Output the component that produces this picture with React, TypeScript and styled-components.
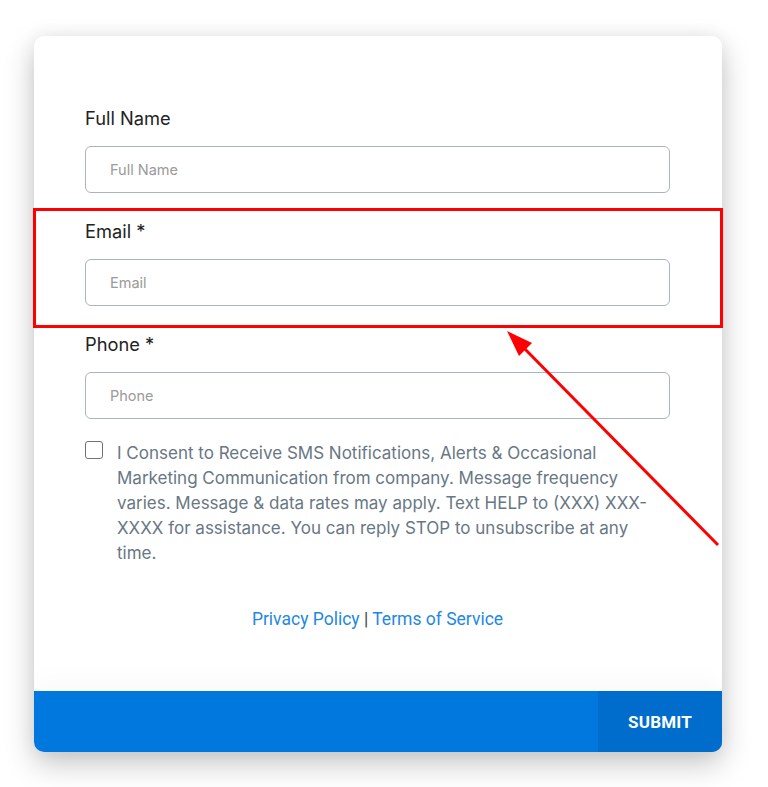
import styled, { createGlobalStyle } from 'styled-components';

const GlobalStyle = createGlobalStyle`
  html, body {
    margin: 0;
    padding: 0;
    background: #ffffff;
  }
  * {
    box-sizing: border-box;
  }
`;

const Page = styled.div`
  position: relative;
  width: 768px;
  height: 787px;
  padding: 36px 46px 0 34px;
  overflow: hidden;
`;

const Card = styled.form`
  width: 688px;
  background: #fff;
  border-radius: 10px;
  box-shadow: 0 12px 30px rgba(0, 0, 0, 0.22), 0 0 18px rgba(0, 0, 0, 0.06);
  overflow: hidden;
  display: flex;
  flex-direction: column;
`;

const Body = styled.div`
  padding: 69px 52px 58px 51px;
  display: flex;
  flex-direction: column;
`;

const Field = styled.div`
  display: flex;
  flex-direction: column;
  gap: 14px;
  margin-bottom: 25px;
`;

const Label = styled.label`
  font-family: Inter, "Noto Sans", sans-serif;
  font-size: 18.3px;
  line-height: 27px;
  color: #222;
`;

const Input = styled.input`
  height: 47px;
  width: 100%;
  border: 1px solid #a9b3c4;
  border-radius: 6px;
  padding: 0 24px;
  font-family: Inter, "Noto Sans", sans-serif;
  font-size: 14.5px;
  color: #333;
  outline: none;
  &::placeholder {
    color: #9a9a9a;
  }
`;

const Consent = styled.div`
  display: flex;
  gap: 14px;
  margin-top: -3px;
`;

const Box = styled.span`
  flex: none;
  width: 18px;
  height: 18px;
  border: 1.5px solid #6b747c;
  border-radius: 3px;
`;

const ConsentText = styled.p`
  margin: 0;
  font-family: Inter, "Noto Sans", sans-serif;
  font-size: 17px;
  line-height: 25px;
  color: #687784;
`;

const Links = styled.div`
  margin-top: 40px;
  text-align: center;
  font-family: Roboto, "Liberation Sans", sans-serif;
  font-size: 17.5px;
  line-height: 27px;
  color: #444;
`;

const Link = styled.a`
  color: #1e88e5;
  text-decoration: none;
`;

const Footer = styled.div`
  display: flex;
  height: 61px;
  background: #0078de;
  box-shadow: 0 -12px 24px rgba(0, 0, 0, 0.025);
`;

const Submit = styled.button`
  margin-left: auto;
  width: 124px;
  border: none;
  background: #006dcc;
  color: #fff;
  font-family: Roboto, "Liberation Sans", sans-serif;
  font-weight: 700;
  font-size: 17px;
  letter-spacing: 0.2px;
  cursor: pointer;
`;

const Highlight = styled.div`
  position: absolute;
  left: 33px;
  top: 208px;
  width: 690px;
  height: 120px;
  border: 3px solid #ff0000;
  pointer-events: none;
`;

const Arrow = styled.svg`
  position: absolute;
  left: 0;
  top: 0;
  pointer-events: none;
`;

const fields = [
  { label: 'Full Name', placeholder: 'Full Name' },
  { label: 'Email *', placeholder: 'Email' },
  { label: 'Phone *', placeholder: 'Phone' },
];

export default function App() {
  return (
    <>
      <GlobalStyle />
      <Page>
        <Card onSubmit={(e) => e.preventDefault()}>
          <Body>
            {fields.map((f) => (
              <Field key={f.label}>
                <Label>{f.label}</Label>
                <Input placeholder={f.placeholder} />
              </Field>
            ))}
            <Consent>
              <Box />
              <ConsentText>
                I Consent to Receive SMS Notifications, Alerts &amp; Occasional Marketing Communication
                from company. Message frequency varies. Message &amp; data rates may apply. Text HELP
                to (XXX) XXX-XXXX for assistance. You can reply STOP to unsubscribe at any time.
              </ConsentText>
            </Consent>
            <Links>
              <Link href="#">Privacy Policy</Link> | <Link href="#">Terms of Service</Link>
            </Links>
          </Body>
          <Footer>
            <Submit type="submit">SUBMIT</Submit>
          </Footer>
        </Card>
        <Highlight />
        <Arrow width="768" height="787" viewBox="0 0 768 787">
          <line x1="718" y1="545" x2="520" y2="344" stroke="#ff0000" strokeWidth="3" />
          <polygon points="507,331 532,343 519,356" fill="#ff0000" />
        </Arrow>
      </Page>
    </>
  );
}
